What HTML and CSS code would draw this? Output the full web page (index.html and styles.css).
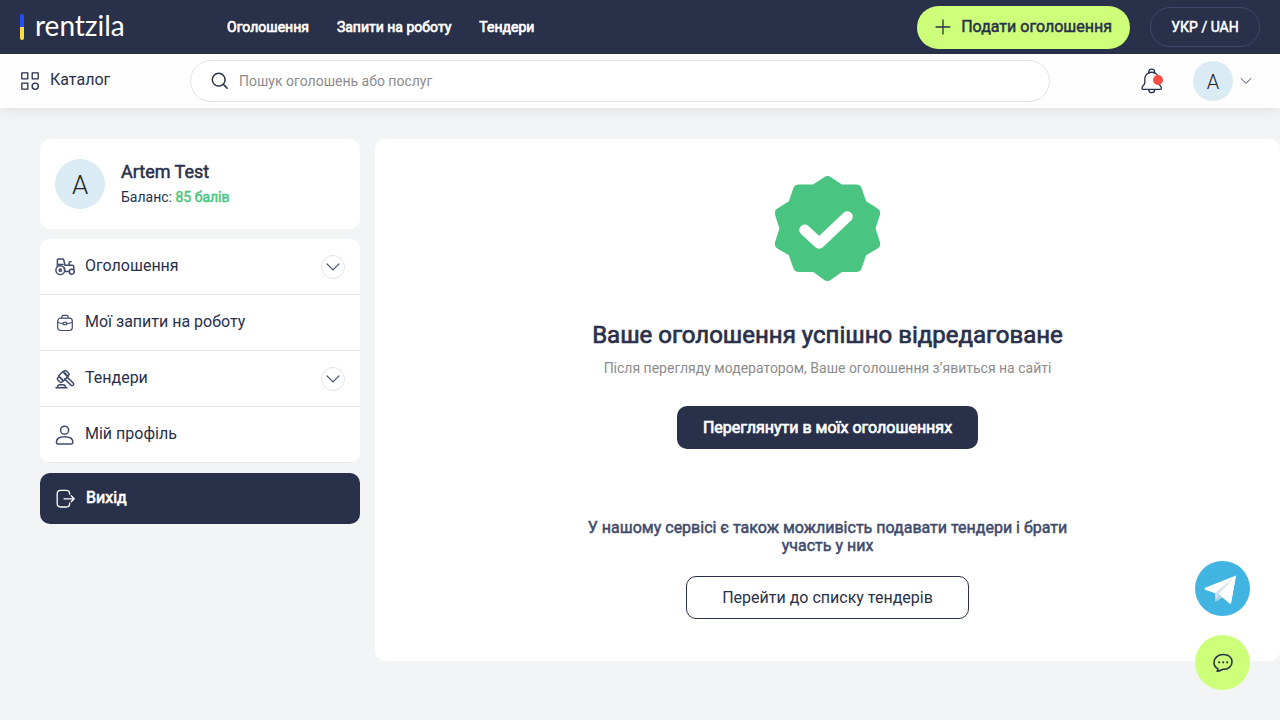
FILE: index.html
```html
<!DOCTYPE html>
<html lang="uk">
<head>
<meta charset="utf-8">
<meta name="viewport" content="width=device-width, initial-scale=1">
<title>Rentzila</title>
<link rel="stylesheet" href="styles.css">
</head>
<body>
<header class="header">
  <div class="topbar">
    <a class="logo" href="#"><span class="logo-flag"></span><span class="logo-name">rentzila</span></a>
    <nav class="topnav">
      <a href="#">Оголошення</a>
      <a href="#">Запити на роботу</a>
      <a href="#">Тендери</a>
    </nav>
    <div class="topbar-actions">
      <a class="add-button" href="#">
        <svg width="16" height="16" viewBox="0 0 16 16"><path d="M8 1v14M1 8h14"/></svg>
        Подати оголошення
      </a>
      <button class="locale" type="button">УКР / UAH</button>
    </div>
  </div>
  <div class="subbar">
    <a class="catalog" href="#">
      <svg width="20" height="20" viewBox="0 0 20 20"><path d="M1.8 1.8h6v6h-6zM12.2 1.8h6v6h-6zM1.8 12.2h6v6h-6z"/><circle cx="15.2" cy="15.2" r="3.1"/></svg>
      <span class="label">Каталог</span>
    </a>
    <label class="search">
      <svg width="18" height="18" viewBox="0 0 18 18"><circle cx="7.7" cy="7.7" r="6.4"/><path d="M12.4 12.4L16.2 16.2"/></svg>
      <input type="text" placeholder="Пошук оголошень або послуг" aria-label="Пошук">
    </label>
    <div class="user-tools">
      <button class="bell" type="button" aria-label="Сповіщення">
        <svg width="22" height="26" viewBox="0 0 22 26"><path d="M7.8 5.2V3.9C7.8 2.2 9.1 1.2 10.7 1.2S13.6 2.2 13.6 3.9V5.2"/><path d="M7 5.2C4.8 6.5 3.8 8.6 3.8 11V14.8C3.8 17 1 17.6 1 20.2C1 21 1.5 21.4 2.2 21.4H19.2C20 21.4 20.4 21 20.4 20.2C20.4 17.6 17.6 17 17.6 14.8V11C17.6 8.6 16.6 6.5 14.4 5.2C12.5 4.2 9 4.2 7 5.2Z"/><path d="M7.6 21.6C7.8 23.7 9 24.7 10.7 24.7S13.6 23.7 13.8 21.6"/></svg>
        <span class="bell-dot"></span>
      </button>
      <button class="user-menu" type="button" aria-label="Меню користувача">
        <span class="avatar avatar-small">A</span>
        <svg width="12" height="8" viewBox="0 0 12 8"><path d="M1 1.5L6 6.4L11 1.5"/></svg>
      </button>
    </div>
  </div>
</header>

<div class="page">
  <aside class="sidebar">
    <section class="profile">
      <span class="avatar">A</span>
      <div class="label">
        <div class="profile-name">Artem Test</div>
        <div class="profile-balance">Баланс: <strong>85 балів</strong></div>
      </div>
    </section>
    <nav class="menu">
      <button class="menu-item" type="button">
        <svg class="menu-icon" viewBox="0 0 20 20"><circle cx="5.3" cy="13.2" r="4.4"/><circle cx="5.3" cy="13.2" r="1.1"/><circle cx="16.8" cy="14.8" r="2.5"/><path d="M2.4 9.5V3C2.4 2.4 2.7 2.1 3.3 2.1H7.6C8.3 2.1 8.6 2.4 8.8 3L10 8.3H17.2C18.3 8.3 18.8 8.9 18.8 9.8V12.4M9.8 14.5H14.2M8.9 10.6C9.5 11.3 9.7 12 9.7 13M14.2 8.2V5.8C14.2 5 14.6 4.7 15.3 4.7H16M2.6 7.5H8"/></svg>
        <span class="label">Оголошення</span>
        <span class="toggle"><svg width="14" height="8" viewBox="0 0 14 8"><path d="M1 .8L7 6.8L13 .8"/></svg></span>
      </button>
      <a class="menu-item" href="#">
        <svg class="menu-icon thin" viewBox="0 0 20 20"><rect x="2.7" y="5.2" width="14.6" height="12.3" rx="3"/><path d="M6.8 5V4.2C6.8 3 7.3 2.400 8.400 2.400H11.600C12.700 2.400 13.200 3 13.200 4.200V5M2.800 9.200C4.800 10 6.400 10.400 8.100 10.500M17.200 9.200C15.200 10 13.600 10.400 11.900 10.500"/><rect x="8.100" y="9.400" width="3.800" height="2.300" rx="1"/></svg>
        <span class="label">Мої запити на роботу</span>
      </a>
      <button class="menu-item" type="button">
        <svg class="menu-icon" viewBox="0 0 20 20"><rect x="5" y="3.600" width="6.600" height="7" transform="rotate(-45 8.300 7.100)"/><rect x="3.400" y="7.700" width="3.200" height="6" rx="1.400" transform="rotate(-45 5 10.700)"/><rect x="9.800" y="1.200" width="3.200" height="6" rx="1.400" transform="rotate(-45 11.400 4.200)"/><path d="M9.800 10.100L16 16.200C17.600 17.500 19.500 15.500 18.200 14L12 7.900M1 18.800H12M2.400 18.600C2.500 16.700 3.400 15.700 5 15.700H8C9.600 15.700 10.500 16.700 10.600 18.600"/></svg>
        <span class="label">Тендери</span>
        <span class="toggle"><svg width="14" height="8" viewBox="0 0 14 8"><path d="M1 .8L7 6.8L13 .8"/></svg></span>
      </button>
      <a class="menu-item" href="#">
        <svg class="menu-icon" viewBox="0 0 20 20"><circle cx="9.600" cy="5.200" r="4"/><path d="M1.400 17.200C1.400 13.500 5 11.700 9.600 11.700S17.900 13.500 17.900 17.200C17.900 18.300 17.300 18.900 16.300 18.900H3C2 18.900 1.400 18.300 1.400 17.200Z"/></svg>
        <span class="label">Мій профіль</span>
      </a>
    </nav>
    <button class="logout" type="button">
      <svg width="20" height="20" viewBox="0 0 20 20"><path d="M13.600 5.200V4.600C13.600 2.600 12.400 1.400 10.400 1.400H4.600C2.400 1.400 1.200 2.600 1.200 4.800V14.600C1.200 16.800 2.400 18 4.600 18H10.400C12.400 18 13.600 16.800 13.600 14.800V14.200M8 9.800H18M15.200 6.800L18.200 9.800L15.200 12.800"/></svg>
      <span class="label">Вихід</span>
    </button>
  </aside>

  <main class="result">
    <svg class="seal" width="105" height="105" viewBox="0 0 106 106"><path class="seal-body" d="M49.500 1.200Q51 0 53 0T56.500 1.200L67.500 8.500H82Q86 8.500 87.400 12L92 25.500L104 33Q106 34.500 106 36V39L101.500 53L106 67V70Q106 71.500 104 73L92 80L87.400 93.500Q86 97 82 97H67.500L56.500 104.800Q55 106 53 106T49.500 104.800L38.500 97H24Q20 97 18.600 93.500L14 80L2 73Q0 71.500 0 70V67L4.500 53L0 39V36Q0 34.500 2 33L14 25.500L18.600 12Q20 8.500 24 8.500H38.500Z"/><path class="seal-tick" d="M30 54.500L44.500 68L73 41"/></svg>
    <h1>Ваше оголошення успішно відредаговане</h1>
    <p class="note">Після перегляду модератором, Ваше оголошення з’явиться на сайті</p>
    <a class="button button-dark" href="#">Переглянути в моїх оголошеннях</a>
    <p class="offer">У нашому сервісі є також можливість подавати тендери і брати участь у них</p>
    <a class="button button-light" href="#">Перейти до списку тендерів</a>
  </main>
</div>

<div class="contacts">
  <a class="contact contact-telegram" href="#" aria-label="Telegram">
    <svg width="56" height="56" viewBox="0 0 56 56"><path fill="#fff" d="M9.500 27L41 14.500L36 42.500L22.500 33L10 28.800Z"/><path fill="#d2e4f2" d="M20 32L41 14.800L24 33L20.500 41Z"/><path fill="#b5d3e8" d="M24 33L27.500 36L21 41Z"/><path fill="#fff" d="M24 33L41 14.500L36 42Q35.500 43.300 34 42.300Z"/></svg>
  </a>
  <button class="contact contact-chat" type="button" aria-label="Чат">
    <svg width="20" height="20" viewBox="0 0 20 20"><path d="M4.800 15.600C2.400 14.500 1 12.200 1 9.500C1 4.900 4.800 1.500 10.300 1.500S19 4.700 19 9S15.200 16.300 10.200 16.300C8.500 16.300 7.800 17.800 4.100 18.200C4.700 17.300 5 16.500 4.800 15.600Z"/><path class="dots" d="M6.200 9.300h.01M10.200 9.300h.01M14.200 9.300h.01"/></svg>
  </button>
</div>
</body>
</html>
```
FILE: styles.css
```css
* { box-sizing: border-box; }

body {
  margin: 0;
  min-height: 100vh;
  background: #f3f4f6;
  color: #29304a;
  font-family: Roboto, "Liberation Sans", sans-serif;
  font-size: 16px;
  line-height: 20px;
}

a { color: inherit; text-decoration: none; }

button { border: 0; padding: 0; background: none; color: inherit; font: inherit; cursor: pointer; }

svg { flex: none; fill: none; stroke: #29304a; stroke-width: 1.3; stroke-linecap: round; stroke-linejoin: round; }

.label { padding-bottom: 2px; }

/* Heavier strokes on the regular cut keep its narrower letter widths. */
.topnav, .add-button, .locale, .profile-name, .profile-balance strong,
.logout, h1, .button-dark, .offer { font-weight: 400; -webkit-text-stroke: 0.5px currentColor; }
.topnav, .logout, .button-dark, h1 { -webkit-text-stroke-width: 0.7px; }

.header { box-shadow: 0 2px 12px rgba(41, 48, 74, 0.1); }

.topbar {
  display: flex;
  align-items: center;
  height: 54px;
  padding: 0 20px;
  background: #29304a;
  color: #fff;
}

.logo { display: flex; align-items: center; gap: 11px; width: 207px; }
.logo-flag { width: 4px; height: 26px; border-radius: 2px; background: linear-gradient(#1f4dff 50%, #ffdc3c 50%); }
.logo-name { font-family: Lato, sans-serif; font-size: 28px; line-height: 28px; padding-bottom: 4px; }

.topnav { display: flex; gap: 28px; font-size: 14px; }

.topbar-actions { display: flex; align-items: center; gap: 20px; margin-left: auto; }

.add-button {
  display: flex;
  align-items: center;
  gap: 10px;
  height: 43px;
  padding: 0 18px;
  border-radius: 22px;
  background: #cdff7b;
  color: #29304a;
}

.locale { width: 110px; height: 40px; border: 1px solid #3c476a; border-radius: 20px; font-size: 14px; }

.subbar { display: flex; align-items: center; height: 54px; padding: 0 28px 0 20px; background: #fefefe; }

.catalog { display: flex; align-items: center; gap: 10px; width: 170px; }

.search {
  display: flex;
  flex: 1;
  align-items: center;
  gap: 10px;
  height: 42px;
  padding: 0 20px;
  border: 1px solid #e2e3e7;
  border-radius: 21px;
  background: #fff;
}
.search svg { stroke-width: 1.5; }
.search input { flex: 1; min-width: 0; border: 0; padding: 0; outline: 0; background: none; font: inherit; font-size: 14px; }
.search input::placeholder { color: #8c8c8c; opacity: 1; }

.user-tools { display: flex; align-items: center; gap: 30px; margin-left: 91px; }
.bell { position: relative; display: flex; }
.bell-dot { position: absolute; top: 7px; right: 0; width: 10px; height: 10px; border-radius: 50%; background: #ff4d42; }
.user-menu { display: flex; align-items: center; gap: 7px; }
.user-menu svg { stroke: #404b6c; stroke-width: 1; }

.avatar {
  display: flex;
  flex: none;
  align-items: center;
  justify-content: center;
  width: 50px;
  height: 50px;
  padding-top: 2px;
  border-radius: 50%;
  background: #dbebf3;
  color: #222;
  font-size: 26px;
  font-weight: 300;
}
.avatar-small { width: 40px; height: 40px; font-size: 20px; }

.page { display: flex; align-items: flex-start; gap: 15px; padding: 31px 0 59px 40px; }

.sidebar { display: flex; flex: none; flex-direction: column; gap: 10px; width: 320px; }

.profile { display: flex; align-items: center; gap: 16px; height: 90px; padding: 0 15px; border-radius: 10px; background: #fff; }
.profile-name { font-size: 18px; line-height: 24px; }
.profile-balance { margin-top: 3px; font-size: 14px; }
.profile-balance strong { color: #49c581; }

.menu { overflow: hidden; border-radius: 10px; background: #fff; }
.menu-item {
  display: flex;
  align-items: center;
  gap: 10px;
  width: 100%;
  height: 56px;
  padding: 0 15px;
  border-bottom: 1px solid #e2e3e7;
  text-align: left;
}
.menu-icon { width: 20px; height: 20px; stroke: #404b6c; stroke-width: 1.5; }
.menu-icon.thin { stroke-width: 1.2; }
.toggle {
  display: flex;
  align-items: center;
  justify-content: center;
  width: 24px;
  height: 24px;
  margin-left: auto;
  border: 1px solid #e2e3e7;
  border-radius: 50%;
}
.toggle svg { stroke: #404b6c; stroke-width: 1.2; }

.logout {
  display: flex;
  align-items: center;
  gap: 10px;
  height: 51px;
  padding: 0 16px;
  border-radius: 10px;
  background: #29304a;
  color: #fff;
}
.logout svg { stroke: #fff; }

.result {
  display: flex;
  flex: 1;
  flex-direction: column;
  align-items: center;
  padding: 37px 20px 42px;
  border-radius: 10px;
  background: #fff;
  text-align: center;
}
.seal { stroke: none; }
.seal-body { fill: #49c581; }
.seal-tick { stroke: #fff; stroke-width: 11; }

h1 { margin: 40px 0 0; font-size: 24px; line-height: 28px; }
.note { margin: 9px 0 0; color: #8c8c8c; font-size: 14px; }

.button { height: 43px; padding: 0 26px; border-radius: 10px; line-height: 43px; }
.button-dark { margin-top: 28px; background: #29304a; color: #fff; }
.button-light { padding: 0 35px; border: 1px solid #29304a; line-height: 41px; }

.offer { max-width: 490px; margin: 70px 0 21px; color: #404b6c; line-height: 18px; }

.contacts { position: fixed; right: 30px; bottom: 30px; display: flex; flex-direction: column; gap: 19px; }
.contact { display: flex; align-items: center; justify-content: center; width: 55px; height: 55px; border-radius: 50%; }
.contact-telegram { background: #41b4e1; }
.contact-telegram svg { stroke: none; }
.contact-chat { background: #cdff7b; }
.contact-chat svg { stroke-width: 1.6; }
.contact-chat .dots { stroke-width: 2.2; }
```
